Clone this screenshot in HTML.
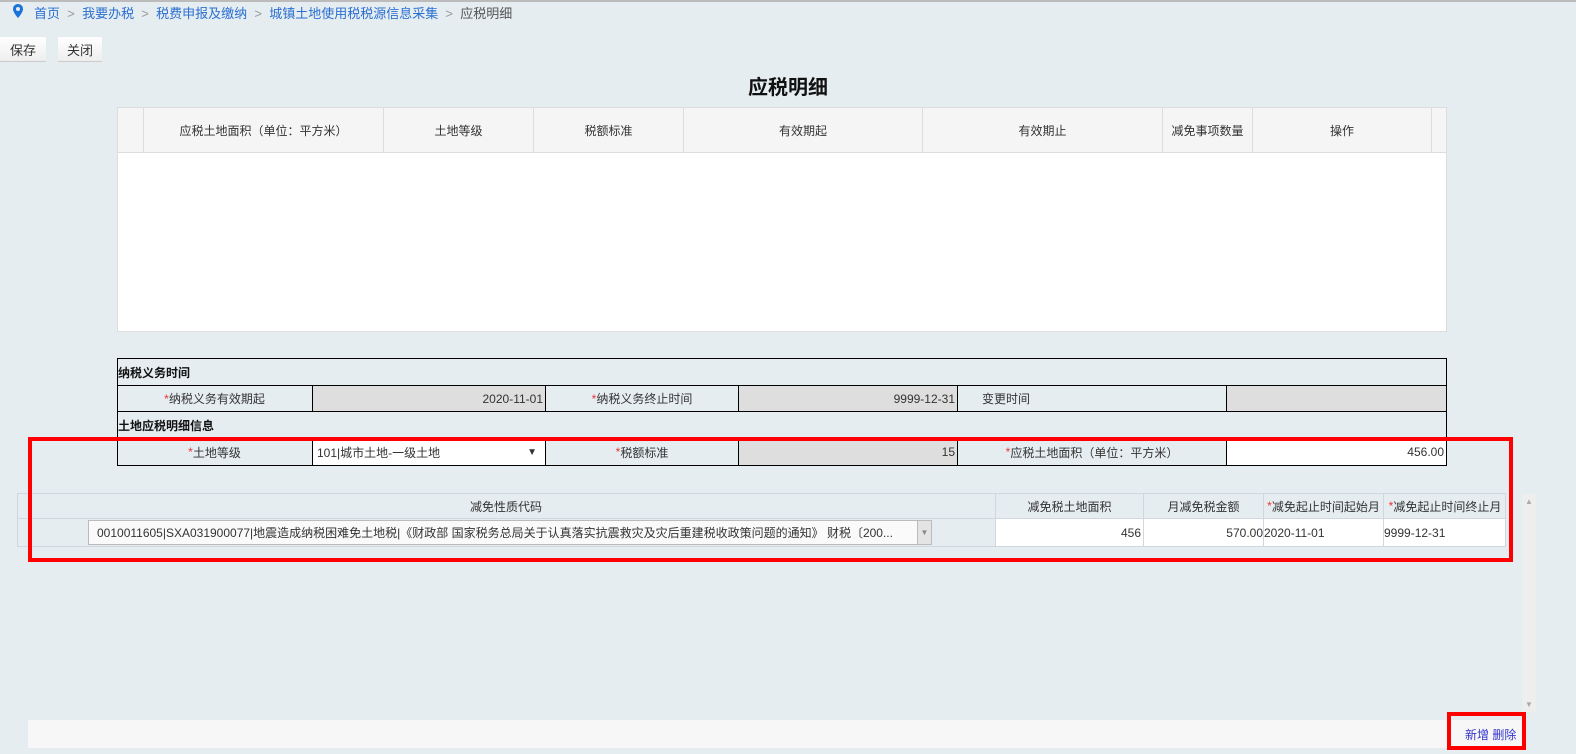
<!DOCTYPE html>
<html><head><meta charset="utf-8"><style>
*{margin:0;padding:0;box-sizing:border-box}
body{width:1576px;height:754px;overflow:hidden;background:#e6edf1;font-family:"Liberation Sans","Noto Sans CJK SC",sans-serif;font-size:12px;color:#333;position:relative}
.a{position:absolute}
.c{position:absolute;display:flex;align-items:center;justify-content:center;white-space:nowrap}
.r{justify-content:flex-end;padding-right:2px}
.l{justify-content:flex-start}
.s{color:#e33}
</style></head><body>
<div class="a" style="left:0;top:0;width:1576px;height:2px;background:#bbb"></div>
<svg class="a" style="left:13px;top:4px" width="10" height="14" viewBox="0 0 10 14"><path d="M5 0C2.2 0 0 2.2 0 5c0 3.5 5 9 5 9s5-5.5 5-9C10 2.2 7.8 0 5 0z" fill="#1a73d9"/><circle cx="5" cy="5" r="2" fill="#e6edf1"/></svg>
<div class="a" style="left:34px;top:3px;font-size:13px;color:#2a6fd0;white-space:nowrap">首页 <span style="color:#999">&nbsp;&gt;&nbsp;</span> 我要办税 <span style="color:#999">&nbsp;&gt;&nbsp;</span> 税费申报及缴纳 <span style="color:#999">&nbsp;&gt;&nbsp;</span> 城镇土地使用税税源信息采集 <span style="color:#999">&nbsp;&gt;&nbsp;</span> <span style="color:#555">应税明细</span></div>
<div class="c" style="left:0;top:37px;width:46px;height:25px;background:linear-gradient(#fff,#eee);border-bottom:1px solid #ccc;font-size:13px">保存</div>
<div class="c" style="left:58px;top:37px;width:44px;height:25px;background:linear-gradient(#fff,#eee);border-bottom:1px solid #ccc;font-size:13px">关闭</div>
<div class="c" style="left:0;top:70px;width:1576px;height:30px;font-size:20px;font-weight:bold;color:#111">应税明细</div>
<div class="a" style="left:117px;top:107px;width:1330px;height:225px;background:#fff;border:1px solid #ddd"></div>
<div class="a" style="left:117px;top:107px;width:1330px;height:46px;background:#f5f5f5;border:1px solid #ddd"></div>
<div class="c" style="left:143px;top:107px;width:240px;height:46px;border-left:1px solid #ddd">应税土地面积（单位：平方米）</div>
<div class="c" style="left:383px;top:107px;width:150px;height:46px;border-left:1px solid #ddd">土地等级</div>
<div class="c" style="left:533px;top:107px;width:150px;height:46px;border-left:1px solid #ddd">税额标准</div>
<div class="c" style="left:683px;top:107px;width:239px;height:46px;border-left:1px solid #ddd">有效期起</div>
<div class="c" style="left:922px;top:107px;width:240px;height:46px;border-left:1px solid #ddd">有效期止</div>
<div class="c" style="left:1162px;top:107px;width:90px;height:46px;border-left:1px solid #ddd">减免事项数量</div>
<div class="c" style="left:1252px;top:107px;width:180px;height:46px;border-left:1px solid #ddd;border-right:1px solid #ddd">操作</div>

<div class="a" style="left:117px;top:358px;width:1330px;height:108px;border:1px solid #000"></div>
<div class="c l" style="left:118px;top:359px;height:26px;font-weight:bold;color:#111">纳税义务时间</div>
<div class="a" style="left:117px;top:385px;width:1330px;height:27px;border-top:1px solid #000;border-bottom:1px solid #000"></div>
<div class="c" style="left:117px;top:385px;width:195px;height:27px"><span class="s">*</span>纳税义务有效期起</div>
<div class="c r" style="left:312px;top:386px;width:233px;height:25px;background:#dedede;border-left:1px solid #000">2020-11-01</div>
<div class="c" style="left:545px;top:385px;width:193px;height:27px;border-left:1px solid #000"><span class="s">*</span>纳税义务终止时间</div>
<div class="c r" style="left:738px;top:386px;width:219px;height:25px;background:#dedede;border-left:1px solid #000">9999-12-31</div>
<div class="c l" style="left:957px;top:385px;width:269px;height:27px;border-left:1px solid #000;padding-left:24px">变更时间</div>
<div class="a" style="left:1226px;top:386px;width:220px;height:25px;background:#dedede;border-left:1px solid #000"></div>
<div class="c l" style="left:118px;top:412px;height:26px;font-weight:bold;color:#111">土地应税明细信息</div>
<div class="a" style="left:117px;top:438px;width:1330px;height:1px;background:#000"></div>
<div class="c" style="left:117px;top:439px;width:195px;height:26px"><span class="s">*</span>土地等级</div>
<div class="c l" style="left:312px;top:439px;width:233px;height:26px;background:#fff;border-left:1px solid #000;padding-left:4px">101|城市土地-一级土地<span style="position:absolute;right:8px;font-size:10px">▼</span></div>
<div class="c" style="left:545px;top:439px;width:193px;height:26px;border-left:1px solid #000"><span class="s">*</span>税额标准</div>
<div class="c r" style="left:738px;top:439px;width:219px;height:26px;background:#dedede;border-left:1px solid #000">15</div>
<div class="c" style="left:957px;top:439px;width:269px;height:26px;border-left:1px solid #000"><span class="s">*</span>应税土地面积（单位：平方米）</div>
<div class="c r" style="left:1226px;top:439px;width:220px;height:26px;background:#fff;border-left:1px solid #000">456.00</div>

<div class="a" style="left:17px;top:493px;width:1489px;height:54px;border:1px solid #cfd8de"></div>
<div class="c" style="left:17px;top:493px;width:978px;height:26px">减免性质代码</div>
<div class="a" style="left:17px;top:518px;width:1489px;height:1px;background:#cfd8de"></div>
<div class="c l" style="left:88px;top:520px;width:844px;height:25px;background:#fafafa;border:1px solid #bbb;padding-left:8px;overflow:hidden">0010011605|SXA031900077|地震造成纳税困难免土地税|《财政部 国家税务总局关于认真落实抗震救灾及灾后重建税收政策问题的通知》 财税〔200...<span style="position:absolute;right:0;top:0;width:14px;height:23px;background:#e4e4e4;border-left:1px solid #bbb;font-size:8px;color:#888;display:flex;align-items:center;justify-content:center">▼</span></div>
<div class="c" style="left:995px;top:493px;width:148px;height:26px;border-left:1px solid #cfd8de">减免税土地面积</div>
<div class="c" style="left:1143px;top:493px;width:120px;height:26px;border-left:1px solid #cfd8de">月减免税金额</div>
<div class="c" style="left:1263px;top:493px;width:120px;height:26px;border-left:1px solid #cfd8de"><span class="s">*</span>减免起止时间起始月</div>
<div class="c" style="left:1383px;top:493px;width:123px;height:26px;border-left:1px solid #cfd8de"><span class="s">*</span>减免起止时间终止月</div>
<div class="c r" style="left:995px;top:519px;width:148px;height:27px;background:#fff;border-left:1px solid #cfd8de">456</div>
<div class="c r" style="left:1143px;top:519px;width:120px;height:27px;background:#fff;border-left:1px solid #cfd8de;padding-right:0">570.00</div>
<div class="c l" style="left:1263px;top:519px;width:120px;height:27px;background:#fff;border-left:1px solid #cfd8de">2020-11-01</div>
<div class="c l" style="left:1383px;top:519px;width:122px;height:27px;background:#fff;border-left:1px solid #cfd8de">9999-12-31</div>

<div class="a" style="left:1522px;top:494px;width:14px;height:218px;background:#eee"></div>
<div class="a" style="left:1525px;top:497px;font-size:8px;color:#aaa">▲</div>
<div class="a" style="left:1525px;top:700px;font-size:8px;color:#aaa">▼</div>
<div class="a" style="left:28px;top:720px;width:1494px;height:28px;background:#f7f7f7"></div>
<div class="a" style="left:1465px;top:726px;font-size:12px;color:#33c">新增 删除</div>

<div class="a" style="left:28px;top:437px;width:1485px;height:125px;border:4px solid #f00"></div>
<div class="a" style="left:1447px;top:712px;width:79px;height:38px;border:4px solid #f00"></div>
</body></html>
